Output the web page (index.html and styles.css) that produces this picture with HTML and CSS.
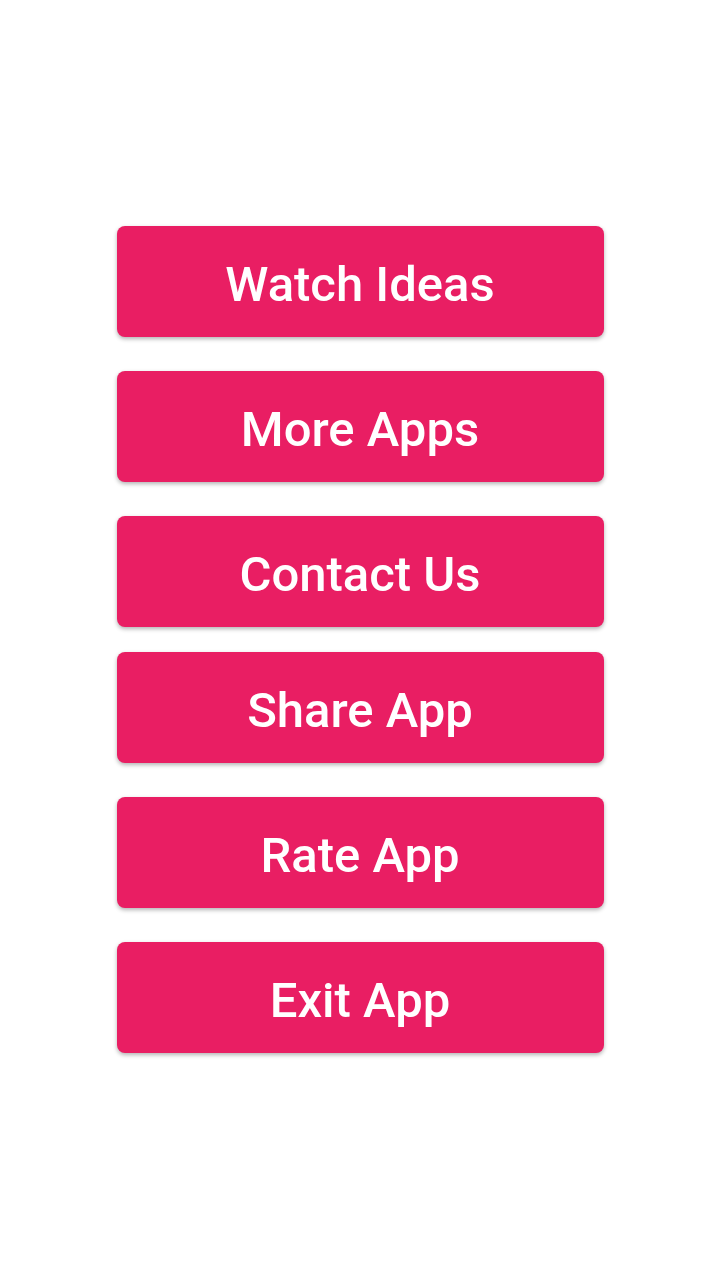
FILE: index.html
```html
<!doctype html>
<html>

<head>
    <meta charset="UTF-8">
    <meta name="viewport" content="width=device-width, initial-scale=1.0">
    <link rel="stylesheet" href="styles.css">
    <title>Menu</title>
</head>

<body>
    <div class="container">
        <button class="menu-button">Watch Ideas</button>
        <button class="menu-button">More Apps</button>
        <button class="menu-button">Contact Us</button>
        <button class="menu-button tight">Share App</button>
        <button class="menu-button">Rate App</button>
        <button class="menu-button">Exit App</button>
    </div>
</body>

</html>
```

FILE: styles.css
```css
body {
    margin: 0;
    background: #ffffff;
    font-family: Roboto, sans-serif;
}

.container {
    display: flex;
    flex-direction: column;
    align-items: center;
    padding-top: 226px;
}

.menu-button {
    width: 487px;
    height: 111px;
    margin-bottom: 34px;
    background-color: #e91e63;
    color: #ffffff;
    border: none;
    border-radius: 8px;
    box-shadow: 0px 2px 4px rgba(0, 0, 0, 0.3);
    font-family: Roboto, sans-serif;
    font-weight: 500;
    font-size: 49px;
    padding: 5px 0 0 0;
    cursor: pointer;
}

.menu-button.tight {
    margin-top: -9px;
}
```
